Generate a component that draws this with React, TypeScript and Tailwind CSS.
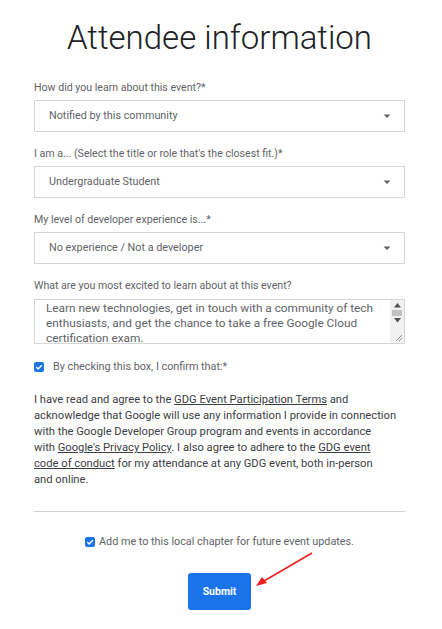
import React from 'react'

const font = { fontFamily: 'Roboto, "Noto Sans", sans-serif' }

function Caret() {
  return (
    <svg width="10" height="10" viewBox="0 0 10 10" className="text-[#5f6368]">
      <path d="M1.5 3.5h7L5 7z" fill="currentColor" />
    </svg>
  )
}

function SelectField({ label, value }: { label: string; value: string }) {
  return (
    <div className="flex flex-col">
      <label className="text-[10.6px] leading-[14px] text-[#5f6368] mb-[5px]">{label}</label>
      <div className="h-[32px] border border-[#d6d6d6] bg-white flex items-center justify-between pl-[14px] pr-[12px]">
        <span className="text-[10.8px] text-[#5f6368]">{value}</span>
        <Caret />
      </div>
    </div>
  )
}

function Check() {
  return (
    <span className="w-[10px] h-[10px] rounded-[2px] bg-[#1a73e8] flex items-center justify-center shrink-0">
      <svg width="8" height="8" viewBox="0 0 8 8">
        <path d="M1.3 4.1l1.8 1.8L6.8 2.2" stroke="white" strokeWidth="1.4" fill="none" />
      </svg>
    </span>
  )
}

export default function App() {
  return (
    <div className="w-[442px] h-[629px] bg-white relative overflow-hidden" style={font}>
      <div className="pl-[34px] pr-[37px] pt-[16px]">
        <h1 className="text-center text-[33px] leading-[44px] text-[#202124] font-light">
          Attendee information
        </h1>

        <div className="mt-[21px] flex flex-col gap-[15px]">
          <SelectField label="How did you learn about this event?*" value="Notified by this community" />
          <SelectField label="I am a... (Select the title or role that's the closest fit.)*" value="Undergraduate Student" />
          <SelectField label="My level of developer experience is...*" value="No experience / Not a developer" />

          <div className="flex flex-col">
            <label className="text-[10.6px] leading-[14px] text-[#5f6368] mb-[6px]">
              What are you most excited to learn about at this event?
            </label>
            <div className="h-[45px] border border-[#d6d6d6] flex overflow-hidden">
              <div className="flex-1 pl-[11px] pt-[1px] text-[11.8px] leading-[15px] text-[#5f6368]">
                Learn new technologies, get in touch with a community of tech enthusiasts, and get the chance to take a free Google Cloud certification exam.
              </div>
              <div className="w-[14px] bg-[#f1f1f1] flex flex-col items-center pt-[3px]">
                <svg width="7" height="5" viewBox="0 0 7 5"><path d="M0 4.5h7L3.5 0z" fill="#505050" /></svg>
                <div className="w-[10px] h-[6px] bg-[#c1c1c1] mt-[2px]" />
                <svg width="7" height="5" viewBox="0 0 7 5" className="mt-[2px]"><path d="M0 0h7L3.5 4.5z" fill="#505050" /></svg>
                <svg width="9" height="9" viewBox="0 0 9 9" className="mt-auto mb-[1px] ml-[3px]">
                  <path d="M8 2L2 8M8 5L5 8" stroke="#8a8a8a" strokeWidth="0.9" />
                </svg>
              </div>
            </div>
          </div>
        </div>

        <div className="mt-[15px] flex items-center gap-[9px]">
          <Check />
          <span className="text-[10.8px] text-[#5f6368]">By checking this box, I confirm that:*</span>
        </div>

        <p className="mt-[17px] text-[11.2px] leading-[16px] text-[#3c4043] whitespace-nowrap">
          I have read and agree to the <a className="underline">GDG Event Participation Terms</a> and<br />
          acknowledge that Google will use any information I provide in connection<br />
          with the Google Developer Group program and events in accordance<br />
          with <a className="underline">Google's Privacy Policy</a>. I also agree to adhere to the <a className="underline">GDG event<br />
          code of conduct</a> for my attendance at any GDG event, both in-person<br />
          and online.
        </p>

        <div className="mt-[23px] border-t border-[#d0d0d0]" />

        <div className="mt-[22px] flex items-center justify-center gap-[4px]">
          <Check />
          <span className="text-[10.8px] text-[#5f6368]">Add me to this local chapter for future event updates.</span>
        </div>

        <div className="mt-[23px] flex justify-center">
          <button className="w-[63px] h-[37px] rounded-[3px] bg-[#1a73e8] text-white text-[10.5px] font-bold">
            Submit
          </button>
        </div>
      </div>

      <svg className="absolute left-0 top-0" width="442" height="629" viewBox="0 0 442 629">
        <line x1="312" y1="553" x2="264" y2="581" stroke="#e8201f" strokeWidth="1.6" />
        <path d="M256 586l6-9 5 6z" fill="#e8201f" />
      </svg>
    </div>
  )
}
